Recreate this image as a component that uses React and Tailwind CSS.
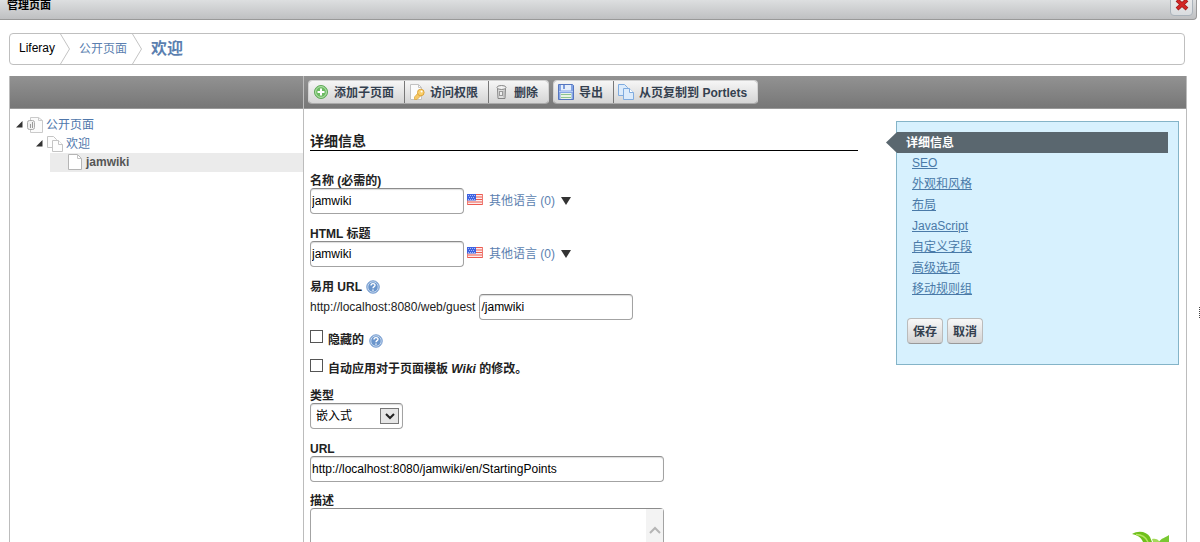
import React from 'react';

function AddIcon() {
  return (
    <svg width="16" height="16" viewBox="0 0 16 16" aria-hidden="true">
      <circle cx="8" cy="8" r="6.5" fill="#6cba62" stroke="#5fa858" />
      <circle cx="8" cy="8" r="5.4" fill="none" stroke="#b9e5b1" strokeWidth="1" />
      <path d="M8 4.500v7M4.500 8h7" stroke="#fff" strokeWidth="2" />
    </svg>
  );
}

function KeyIcon() {
  return (
    <svg width="16" height="16" viewBox="0 0 16 16" aria-hidden="true">
      <path d="M1.500.5h8l3 3v12h-11z" fill="#fbfbfb" stroke="#c2c2c2" />
      <path d="M9.500.5v3h3" fill="none" stroke="#c4c4c4" />
      <path d="M9.500 8.500L5.500 13v2.500h2.500l4-4z" fill="#f6c866" stroke="#dba945" strokeWidth="0.800" />
      <circle cx="11.800" cy="8.500" r="3.300" fill="#f9cf6b" stroke="#dda43c" />
      <circle cx="12.600" cy="7.500" r="1" fill="#fff" />
    </svg>
  );
}

function TrashIcon() {
  return (
    <svg width="16" height="16" viewBox="0 0 16 16" aria-hidden="true">
      <path d="M4.500 4.500h8l-.5 10h-7z" fill="#dedede" stroke="#858585" />
      <ellipse cx="8.500" cy="3.500" rx="4.500" ry="2" fill="#f2f2f2" stroke="#858585" />
      <rect x="6.500" y="7.500" width="3" height="4" fill="#eee" stroke="#999" />
      <path d="M11 6.500v7" stroke="#aaa" />
    </svg>
  );
}

function DiskIcon() {
  return (
    <svg width="16" height="16" viewBox="0 0 16 16" aria-hidden="true">
      <path d="M.5.5h14l1 1v14H.5z" fill="#84a5e4" stroke="#5575bf" />
      <rect x="3" y="1" width="10" height="5.500" fill="#e6eefb" />
      <rect x="5" y="1" width="2" height="4" fill="#7c9bdc" />
      <rect x="2.500" y="9" width="11" height="6" fill="#e9f4e6" />
      <path d="M3 10.500h10M3 13.500h10" stroke="#8fc48f" />
      <path d="M1 7.500h14" stroke="#b5caf4" />
    </svg>
  );
}

function CopyIcon({ tone = 'blue' }) {
  const stroke = tone === 'blue' ? '#7fabdf' : '#c4c4c4';
  const fill = tone === 'blue' ? '#dcebfb' : '#fdfdfd';
  return (
    <svg width="16" height="16" viewBox="0 0 16 16" aria-hidden="true">
      <path d="M.5.5h6l3 3v8h-9z" fill={fill} stroke={stroke} />
      <path d="M5.500 4.500h6l4 4v7h-10z" fill={fill} stroke={stroke} />
      <path d="M11.500 4.500v4h4" fill="#fff" stroke={stroke} />
    </svg>
  );
}

function PageIcon() {
  return (
    <svg width="16" height="16" viewBox="0 0 16 16" aria-hidden="true">
      <path d="M1.500.5h9l4 4v11h-13z" fill="#fff" stroke="#b5b5b5" />
      <path d="M10.500.5v4h4" fill="none" stroke="#c4c4c4" />
    </svg>
  );
}

function SiteIcon() {
  return (
    <svg width="16" height="16" viewBox="0 0 16 16" aria-hidden="true">
      <path d="M3.500.5h8l4 3v12h-12z" fill="#fbfbfb" stroke="#cacaca" />
      <path d="M11.500.5v3h4" fill="none" stroke="#cacaca" />
      <rect x=".5" y="3.500" width="7" height="9" rx="2" fill="#f1f1f1" stroke="#aaa" />
      <path d="M3.500 7v4M5.500 5v6" stroke="#999" />
    </svg>
  );
}

function HelpIcon() {
  return (
    <svg width="14" height="14" viewBox="0 0 14 14" aria-hidden="true">
      <circle cx="7" cy="7" r="6.300" fill="#6a95cc" stroke="#88a9d6" />
      <circle cx="7" cy="7" r="5.200" fill="none" stroke="#c5d8ef" />
      <path d="M5 5.600c0-2.600 4-2.600 4-.3C9 6.800 7 6.600 7 8.300M7 9.500v1.300" fill="none" stroke="#fff" strokeWidth="1.400" />
    </svg>
  );
}

function FlagIcon() {
  return (
    <svg width="16" height="11" viewBox="0 0 16 11" aria-hidden="true">
      <rect width="16" height="11" fill="#fdeceb" />
      <path d="M0 .5h16M0 3h16M0 5.500h16M0 8h16M0 10.500h16" stroke="#ec5a50" strokeWidth="1.200" />
      <path d="M.5 0v11M15.500 0v11" stroke="#ee7a72" />
      <rect width="9" height="6.500" fill="#3f63e0" />
      <path d="M1 1.500h7M2 3.500h6M1 5.500h7" stroke="#a9bbfa" strokeDasharray="1 1" />
    </svg>
  );
}

function Twisty() {
  return (
    <svg width="7" height="7" viewBox="0 0 7 7" aria-hidden="true">
      <path d="M6.500 0v6.500H0z" fill="#333" />
    </svg>
  );
}

function Chevron() {
  return (
    <svg className="h-full w-[10px] shrink-0" viewBox="0 0 10 30" aria-hidden="true">
      <path d="M.5 0l9 15-9 15" fill="none" stroke="#c4c4c4" />
    </svg>
  );
}

function Leaf() {
  return (
    <svg width="44" height="11" viewBox="0 0 44 11" aria-hidden="true">
      <path d="M0 3C7-1 15 1 18 6l2 5H11C9 6 5 4 0 3z" fill="#6fc01c" />
      <path d="M4 3.500c6 0 10 3 12 7.500" fill="none" stroke="#b6e562" strokeWidth="1.500" />
      <path d="M20 8c3-1 6 0 8 3h-7z" fill="#a4d95a" />
      <path d="M37 4v7H27c2-4 6-4 10-7z" fill="#79c832" />
    </svg>
  );
}

const field =
  'block h-[26px] rounded border border-[#a3a3a3] border-t-[#8c8c8c] bg-white px-px text-xs text-black shadow-[inset_0_1px_1px_#ddd]';

const bar = 'h-[33px] border-b border-[#999] bg-linear-to-b from-[#929292] to-[#777]';

function Label({ htmlFor, children }) {
  return (
    <label htmlFor={htmlFor} className="block h-4 text-xs/[18px] font-bold text-[#222]">
      {children}
    </label>
  );
}

function Localized({ id, label, value }) {
  return (
    <div className="mb-[11px]">
      <Label htmlFor={id}>{label}</Label>
      <div className="flex items-center">
        <input id={id} type="text" defaultValue={value} className={`${field} w-[154px]`} />
        <a href="#languages" className="ml-[3px] flex items-center text-[#5b7fb0]">
          <span className="mb-[3px]"><FlagIcon /></span>
          <span className="ml-[6px]">其他语言 (0)</span>
          <svg className="ml-[6px]" width="10" height="8" viewBox="0 0 10 8" aria-hidden="true">
            <path d="M0 0h10L5 8z" fill="#333" />
          </svg>
        </a>
      </div>
    </div>
  );
}

function ToolGroup({ items }) {
  return (
    <div className="flex h-[24px] divide-x divide-[#777] overflow-hidden rounded border border-[#d2d2d2] border-b-[#aaa]">
      {items.map(({ text, icon }) => (
        <button
          key={text}
          type="button"
          className="flex items-center gap-[5px] bg-linear-to-b from-[#f6f6f6] to-[#d5d5d5] pr-[10px] pl-1 text-xs font-bold whitespace-nowrap text-[#34404f]"
        >
          {icon}
          <span className="pt-px">{text}</span>
        </button>
      ))}
    </div>
  );
}

const sections = ['SEO', '外观和风格', '布局', 'JavaScript', '自定义字段', '高级选项', '移动规则组'];

export default function App() {
  return (
    <div className="relative flex h-screen flex-col overflow-hidden bg-white font-['Liberation_Sans','Noto_Sans_CJK_SC',sans-serif] text-xs text-[#222]">
      <header className="mr-[3px] flex h-5 shrink-0 items-end justify-between rounded-br border-r border-b border-[#999] bg-linear-to-b from-[#dddfe0] to-[#bfc0c2] pl-[7px]">
        <h1 className="mb-[6px] text-[11px]/4 font-bold text-black">管理页面</h1>
        <button
          type="button"
          aria-label="关闭"
          className="mr-[3px] mb-[3px] flex h-[22px] w-[23px] items-end justify-center rounded-sm border border-[#aab3bb] bg-linear-to-b from-[#eee] to-[#d9dcdf] pb-1"
        >
          <svg width="14" height="13" viewBox="0 0 14 13" aria-hidden="true">
            <path d="M2 2l10 9M12 2L2 11" stroke="#a01c1c" strokeWidth="4" />
            <path d="M2.500 2.500l9 8M11.500 2.500l-9 8" stroke="#d32626" strokeWidth="2.500" />
          </svg>
        </button>
      </header>

      <nav
        aria-label="路径"
        className="mt-[13px] mr-[15px] ml-[9px] flex h-8 shrink-0 items-center rounded border border-[#bfbfbf] pl-[9px]"
      >
        <span className="mb-[2px] mr-[5px] text-black">Liferay</span>
        <Chevron />
        <a href="#public" className="mr-[5px] ml-[9px] text-[#5b7fb0]">公开页面</a>
        <Chevron />
        <a href="#welcome" className="ml-[9px] text-base font-bold text-[#5b7fb0]">欢迎</a>
      </nav>

      <div className="mt-[11px] mr-[13px] ml-[9px] flex flex-1 border-x border-[#bcbcbc]">
        <aside className="w-[294px] shrink-0 border-r border-[#bcbcbc]">
          <div className={bar} />
          <ul className="pt-[6px] *:h-[19px]">
            <li className="flex items-center pl-[6px]">
              <Twisty />
              <a href="#public" className="ml-1 flex items-center gap-[3px] text-[#4f77ab]">
                <SiteIcon />
                公开页面
              </a>
            </li>
            <li className="flex items-center pl-[26px]">
              <Twisty />
              <a href="#welcome" className="ml-1 flex items-center gap-[3px] text-[#4f77ab]">
                <CopyIcon tone="gray" />
                欢迎
              </a>
            </li>
            <li className="ml-10 flex items-center bg-[#ebebeb] pl-[17px]">
              <a href="#jamwiki" className="flex items-center gap-[3px] pb-px font-bold text-[#555]">
                <PageIcon />
                jamwiki
              </a>
            </li>
          </ul>
        </aside>

        <main className="min-w-0 flex-1">
          <div className={`${bar} flex items-center gap-1 pl-1`}>
            <ToolGroup
              items={[
                { text: '添加子页面', icon: <AddIcon /> },
                { text: '访问权限', icon: <KeyIcon /> },
                { text: '删除', icon: <TrashIcon /> },
              ]}
            />
            <ToolGroup
              items={[
                { text: '导出', icon: <DiskIcon /> },
                { text: '从页复制到 Portlets', icon: <CopyIcon /> },
              ]}
            />
          </div>

          <div className="flex items-start gap-[38px] pr-[7px] pl-[6px]">
            <form className="min-w-0 flex-1 pt-[22px]">
              <h2 className="mb-[21px] h-5 border-b border-black text-sm/5 font-bold">详细信息</h2>

              <Localized id="name" label="名称 (必需的)" value="jamwiki" />
              <Localized id="title" label="HTML 标题" value="jamwiki" />

              <div className="mb-[9px]">
                <div className="flex h-4 items-center gap-1">
                  <Label htmlFor="friendly">易用 URL</Label>
                  <span className="pt-[2px]"><HelpIcon /></span>
                </div>
                <div className="flex items-center gap-1">
                  <span>http://localhost:8080/web/guest</span>
                  <input id="friendly" type="text" defaultValue="/jamwiki" className={`${field} w-[154px]`} />
                </div>
              </div>

              <div className="flex h-[29px] items-start gap-[5px]">
                <input id="hidden" type="checkbox" className="mt-px size-[13px] appearance-none border border-[#555] bg-white checked:bg-[#555]" />
                <label htmlFor="hidden" className="text-xs/[22px] font-bold">隐藏的</label>
                <span className="mt-[5px]"><HelpIcon /></span>
              </div>
              <div className="flex h-[29px] items-start gap-[5px]">
                <input id="apply" type="checkbox" className="mt-px size-[13px] appearance-none border border-[#555] bg-white checked:bg-[#555]" />
                <label htmlFor="apply" className="text-xs/[22px] font-bold">
                  自动应用对于页面模板 <em>Wiki</em> 的修改。
                </label>
              </div>

              <div className="mb-[11px]">
                <Label htmlFor="type">类型</Label>
                <div className="relative w-[93px]">
                  <select id="type" className={`${field} w-full appearance-none pl-[5px]`}>
                    <option>嵌入式</option>
                  </select>
                  <span className="pointer-events-none absolute top-[5px] right-1 flex h-4 w-[19px] items-center justify-center border border-[#777] bg-[#e6e6e6]">
                    <svg width="10" height="7" viewBox="0 0 10 7" aria-hidden="true">
                      <path d="M1 1l4 4 4-4" fill="none" stroke="#222" strokeWidth="2" />
                    </svg>
                  </span>
                </div>
              </div>

              <div className="mb-[10px]">
                <Label htmlFor="url">URL</Label>
                <input id="url" type="text" defaultValue="http://localhost:8080/jamwiki/en/StartingPoints" className={`${field} w-[354px]`} />
              </div>

              <Label htmlFor="description">描述</Label>
              <div className="relative w-[354px]">
                <textarea id="description" className="block h-20 w-full resize-none rounded border border-[#a3a3a3] border-t-[#8c8c8c] bg-white p-1" />
                <span className="pointer-events-none absolute top-px right-px flex h-[78px] w-[17px] justify-center bg-[#f3f3f3] pt-[17px]">
                  <svg width="12" height="8" viewBox="0 0 12 8" aria-hidden="true">
                    <path d="M1 7l5-5 5 5" fill="none" stroke="#b5b5b5" strokeWidth="2" />
                  </svg>
                </span>
              </div>
            </form>

            <section className="mt-3 h-[244px] w-[283px] border border-[#84b4c8] bg-[#d7f1fe] pt-[10px]">
              <div className="-ml-[11px] flex h-[21px]">
                <svg width="11" height="21" viewBox="0 0 11 21" aria-hidden="true">
                  <path d="M11 0L0 10.500 11 21z" fill="#5a676f" />
                </svg>
                <a href="#details" className="mr-[10px] flex-1 bg-[#5a676f] pl-[9px] text-xs/[22px] font-bold text-white">
                  详细信息
                </a>
              </div>
              <ul className="pl-[15px] text-xs/[21px]">
                {sections.map((name) => (
                  <li key={name} className="h-[21px]">
                    <a href="#section" className="text-[#4a7aa8] underline">{name}</a>
                  </li>
                ))}
              </ul>
              <div className="mt-[18px] flex gap-1 pl-[10px]">
                {['保存', '取消'].map((name) => (
                  <button
                    key={name}
                    type="button"
                    className="h-[26px] w-9 rounded border border-[#bbb] border-b-[#999] bg-linear-to-b from-[#f8f8f8] to-[#d4d4d4] pt-px text-xs font-bold text-[#34404f]"
                  >
                    {name}
                  </button>
                ))}
              </div>
            </section>
          </div>
        </main>
      </div>

      <div className="absolute right-6 bottom-0">
        <Leaf />
      </div>
      <svg className="absolute top-[307px] right-0" width="2" height="11" viewBox="0 0 2 11" aria-hidden="true">
        <path d="M1.500 0v11" stroke="#444" strokeDasharray="1 1" />
      </svg>
    </div>
  );
}
